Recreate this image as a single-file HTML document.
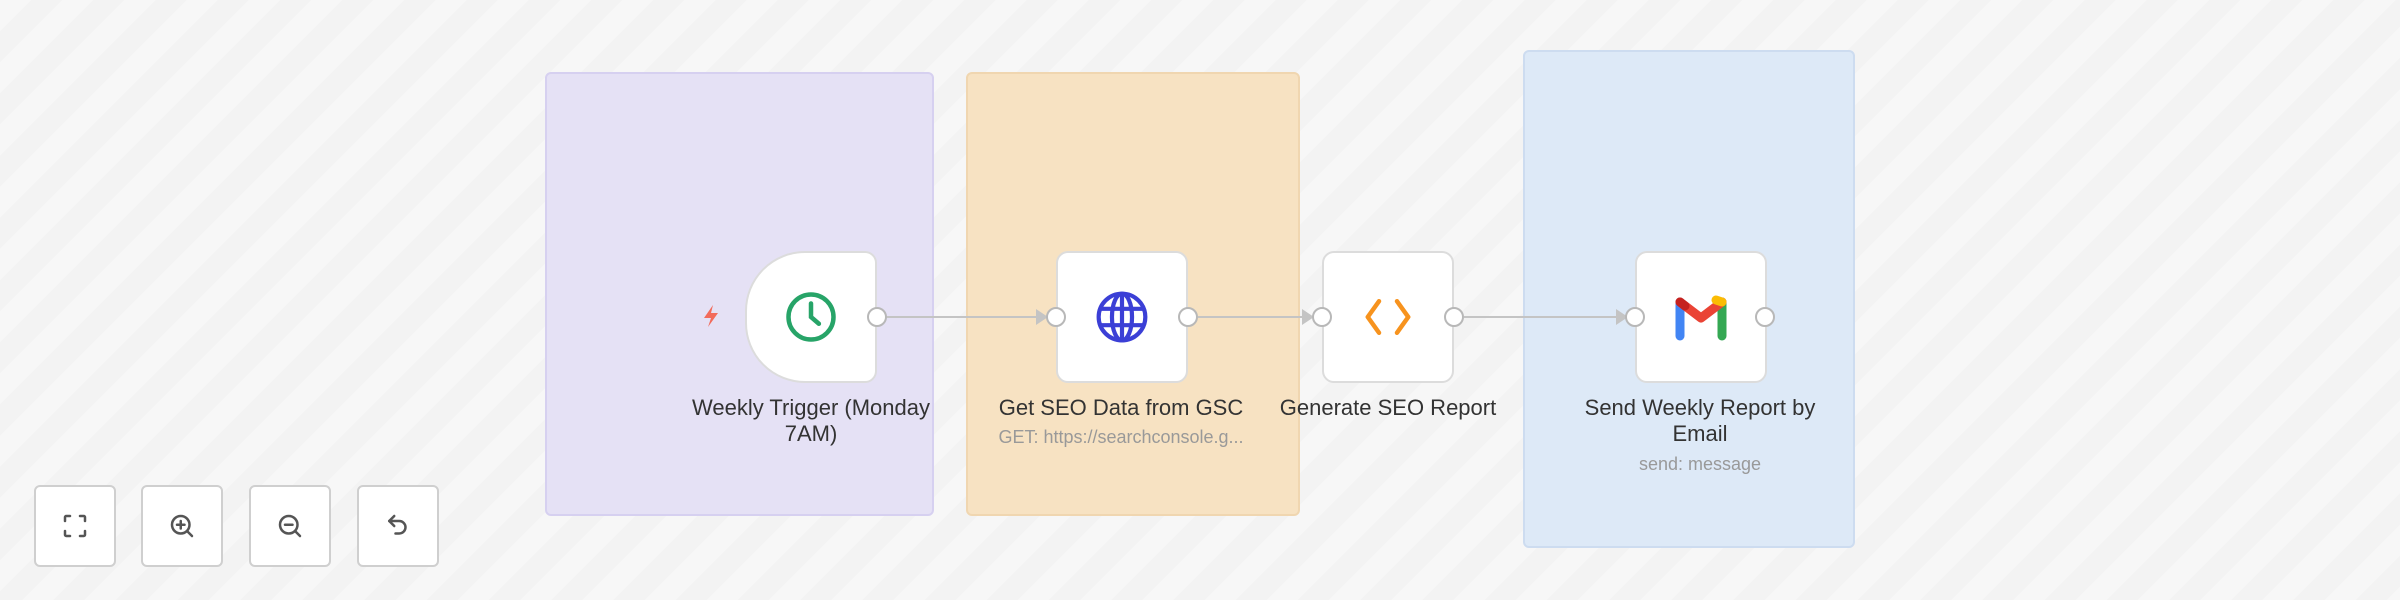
<!DOCTYPE html>
<html><head><meta charset="utf-8"><style>
html,body{margin:0;padding:0}
body{width:2400px;height:600px;position:relative;overflow:hidden;background:#f5f5f5;
background-image:repeating-linear-gradient(135deg,#f7f7f7 0 22px,#f3f3f3 22px 44px);
font-family:"Liberation Sans",sans-serif}
.g{position:absolute;border-radius:6px}
.n{position:absolute;top:251px;width:132px;height:132px;background:#fff;border:2px solid #dcdcdc;border-radius:12px;box-sizing:border-box;display:flex;align-items:center;justify-content:center}
.h{position:absolute;width:20px;height:20px;border-radius:50%;background:#fff;border:2px solid #b8b8b8;box-sizing:border-box;top:307px}
.l{position:absolute;text-align:center;color:#333;font-size:22px;line-height:26px;width:300px}
.s{position:absolute;text-align:center;color:#999;font-size:18px;width:300px}
.b{position:absolute;top:485px;width:82px;height:82px;background:#fff;border:2px solid #cfcfcf;border-radius:6px;box-sizing:border-box;display:flex;align-items:center;justify-content:center}
.ln{position:absolute;height:2px;background:#c4c4c4;top:316px}
.ar{position:absolute;top:309px;width:0;height:0;border-top:8px solid transparent;border-bottom:8px solid transparent;border-left:12px solid #c4c4c4}
</style></head><body>
<div class="g" style="left:545px;top:72px;width:389px;height:444px;background:#e5e1f5;border:2px solid #d6d0f0;box-sizing:border-box"></div>
<div class="g" style="left:966px;top:72px;width:334px;height:444px;background:#f7e2c2;border:2px solid #f0d6b0;box-sizing:border-box"></div>
<div class="g" style="left:1523px;top:50px;width:332px;height:498px;background:#dde9f7;border:2px solid #cddcf0;box-sizing:border-box"></div>

<div class="ln" style="left:885px;width:160px"></div><div class="ar" style="left:1036px"></div>
<div class="ln" style="left:1198px;width:112px"></div><div class="ar" style="left:1302px"></div>
<div class="ln" style="left:1464px;width:160px"></div><div class="ar" style="left:1616px"></div>

<svg style="position:absolute;left:700px;top:303px" width="22" height="26" viewBox="0 0 22 26"><path d="M13 2 L4 15 H11 L8 24 L18 10 H11 Z" fill="#f26b5b"/></svg>

<div class="n" style="left:745px;border-radius:60px 12px 12px 60px"><svg width="54" height="54" viewBox="0 0 24 24" fill="none" stroke="#27a468" stroke-width="2" stroke-linecap="round"><circle cx="12" cy="12" r="10"/><path d="M12 6v6l3.5 3"/></svg></div>
<div class="h" style="left:867px"></div>

<div class="n" style="left:1056px"><svg width="56" height="56" viewBox="0 0 24 24" fill="none" stroke="#3b3fd6" stroke-width="1.8"><circle cx="12" cy="12" r="10"/><ellipse cx="12" cy="12" rx="4.3" ry="10"/><path d="M2.5 8.5h19M2.5 15.5h19M12 2v20"/></svg></div>
<div class="h" style="left:1046px"></div><div class="h" style="left:1178px"></div>

<div class="n" style="left:1322px"><svg width="54" height="54" viewBox="0 0 24 24" fill="none" stroke="#f7931e" stroke-width="2" stroke-linecap="round" stroke-linejoin="round"><path d="M8 5l-5 7 5 7M16 5l5 7-5 7"/></svg></div>
<div class="h" style="left:1312px"></div><div class="h" style="left:1444px"></div>

<div class="n" style="left:1635px"><svg width="58" height="58" viewBox="0 0 58 58"><path d="M8 48V14" stroke="#4285f4" stroke-width="9" stroke-linecap="round"/><path d="M50 48V14" stroke="#34a853" stroke-width="9" stroke-linecap="round"/><path d="M8 14l21 16 21-16" fill="none" stroke="#ea4335" stroke-width="9" stroke-linejoin="round" stroke-linecap="round"/><path d="M44 12l6 2" stroke="#fbbc04" stroke-width="9" stroke-linecap="round"/><path d="M8 14l5 4" stroke="#c5221f" stroke-width="9" stroke-linecap="round"/></svg></div>
<div class="h" style="left:1625px"></div><div class="h" style="left:1755px"></div>

<div class="l" style="left:661px;top:395px">Weekly Trigger (Monday<br>7AM)</div>
<div class="l" style="left:971px;top:395px">Get SEO Data from GSC</div>
<div class="s" style="left:971px;top:427px">GET: https://searchconsole.g...</div>
<div class="l" style="left:1238px;top:395px">Generate SEO Report</div>
<div class="l" style="left:1550px;top:395px">Send Weekly Report by<br>Email</div>
<div class="s" style="left:1550px;top:454px">send: message</div>

<div class="b" style="left:34px"><svg width="30" height="30" viewBox="0 0 24 24" fill="none" stroke="#555" stroke-width="2" stroke-linecap="round"><path d="M4 8V5a1 1 0 0 1 1-1h3M16 4h3a1 1 0 0 1 1 1v3M20 16v3a1 1 0 0 1-1 1h-3M8 20H5a1 1 0 0 1-1-1v-3"/></svg></div>
<div class="b" style="left:141px"><svg width="30" height="30" viewBox="0 0 24 24" fill="none" stroke="#555" stroke-width="2" stroke-linecap="round"><circle cx="11" cy="11" r="7"/><path d="M16 16l4 4M11 8v6M8 11h6"/></svg></div>
<div class="b" style="left:249px"><svg width="30" height="30" viewBox="0 0 24 24" fill="none" stroke="#555" stroke-width="2" stroke-linecap="round"><circle cx="11" cy="11" r="7"/><path d="M16 16l4 4M8 11h6"/></svg></div>
<div class="b" style="left:357px"><svg width="30" height="30" viewBox="0 0 24 24" fill="none" stroke="#555" stroke-width="2" stroke-linecap="round" stroke-linejoin="round"><path d="M9 4L5 8l4 4"/><path d="M5 8h8a5 5 0 0 1 0 10h-3"/></svg></div>
</body></html>
